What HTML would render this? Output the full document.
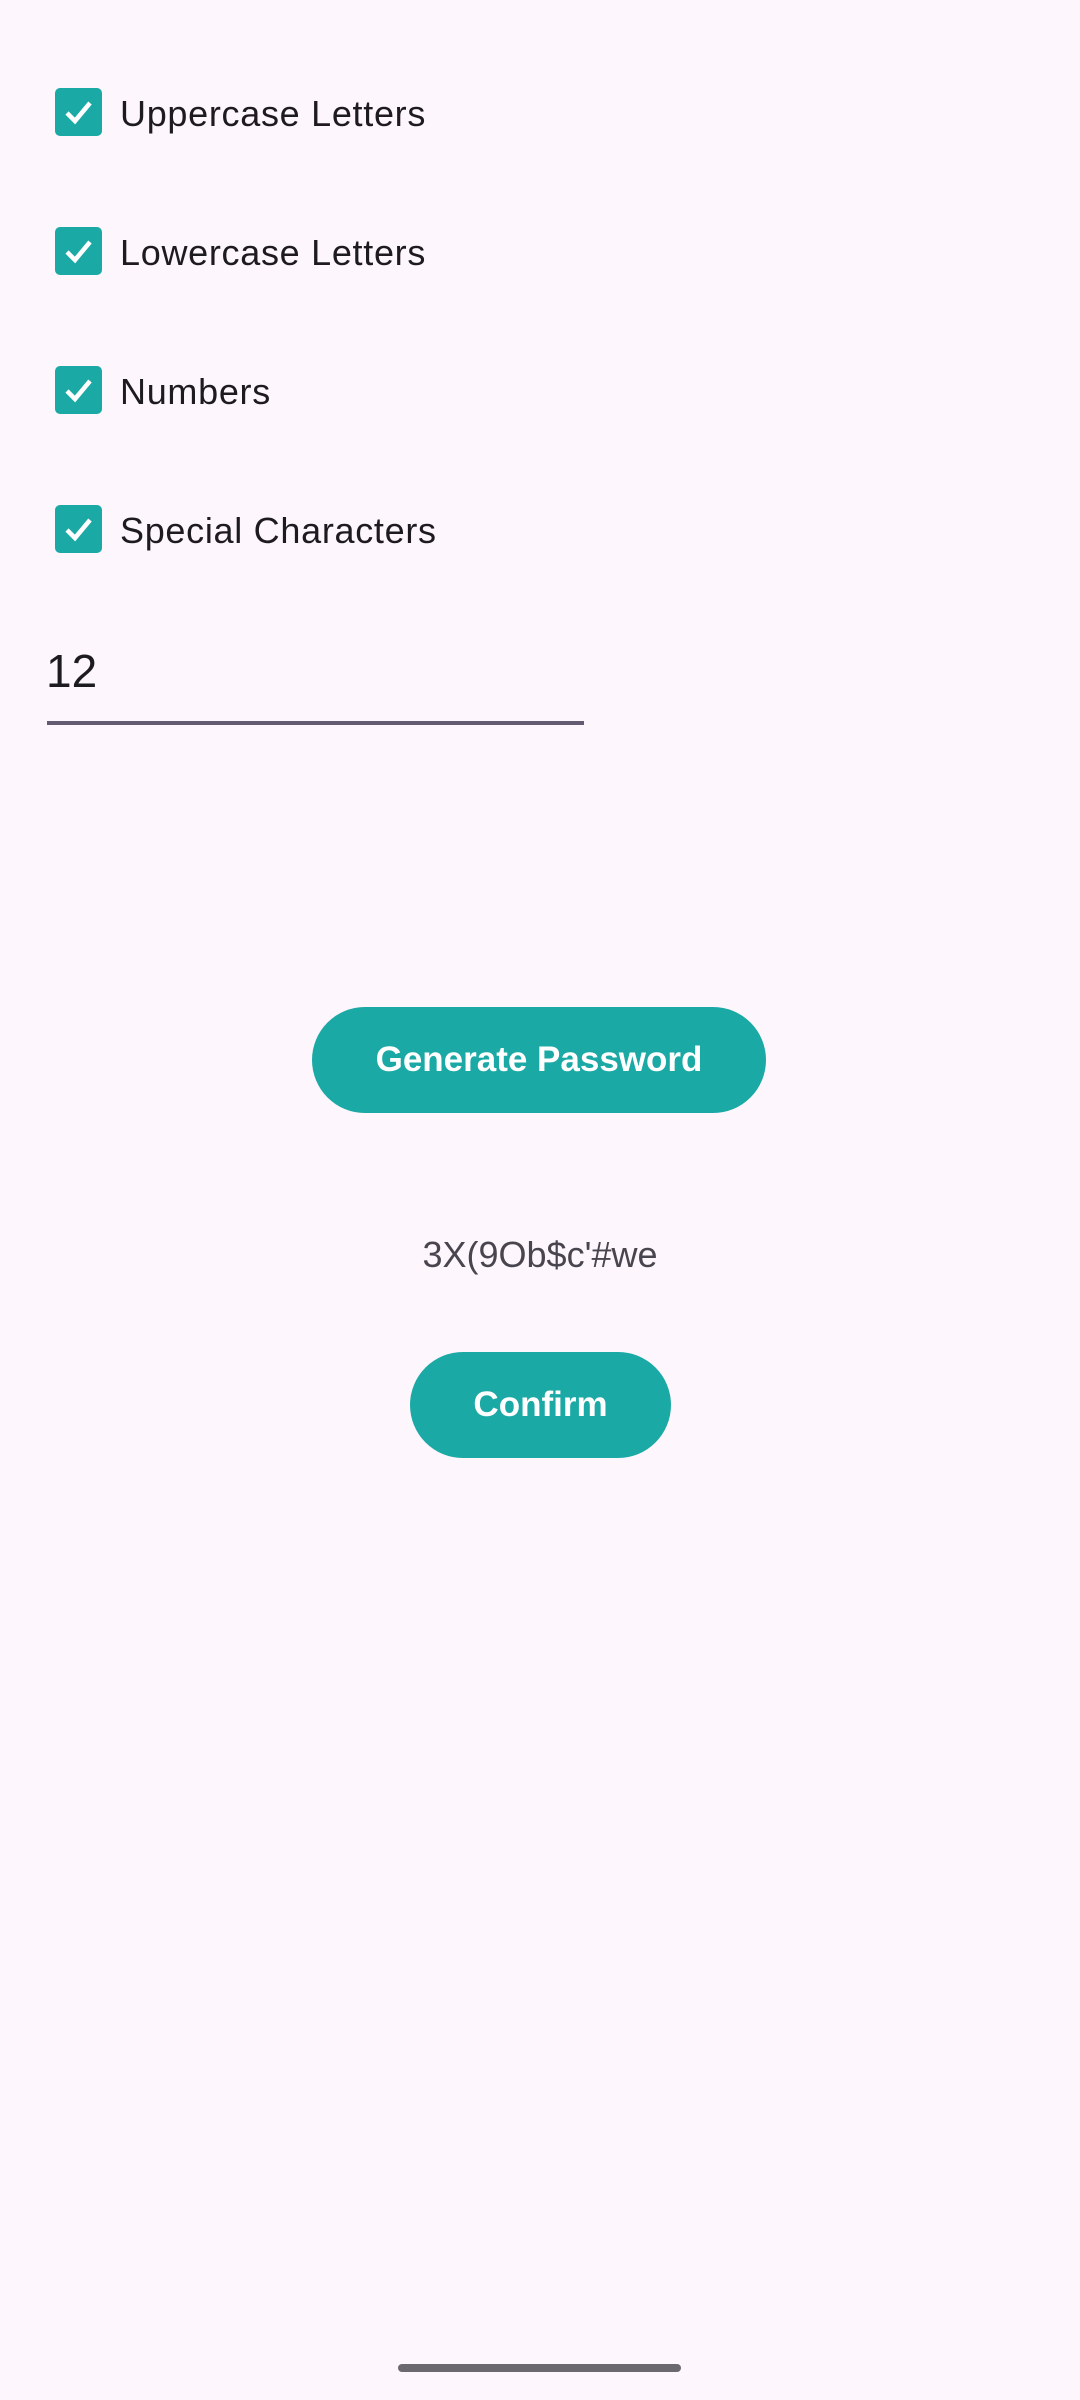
<!DOCTYPE html>
<html><head><meta charset="utf-8"><style>
html,body{margin:0;padding:0}
body{width:1080px;height:2400px;background:#fdf6fd;position:relative;overflow:hidden;font-family:"Liberation Sans",sans-serif}
.cb{position:absolute;left:55px;width:47px;height:48px;background:#1ba9a5;border-radius:5px}
.cb svg{position:absolute;left:0;top:0}
.lbl{position:absolute;left:120px;font-size:36px;letter-spacing:0.7px;color:#1d1b20;line-height:48px}
.btn{position:absolute;background:#1ba9a5;border-radius:60px;color:#fff;font-weight:bold;font-size:35px;text-align:center;line-height:106px;height:106px}
</style></head><body>
<div class="cb" style="top:88px"><svg width="47" height="48"><path d="M12 25 L20 33 L35 15" stroke="#fff" stroke-width="4.5" fill="none"/></svg></div>
<div class="lbl" style="top:90px">Uppercase Letters</div>
<div class="cb" style="top:227px"><svg width="47" height="48"><path d="M12 25 L20 33 L35 15" stroke="#fff" stroke-width="4.5" fill="none"/></svg></div>
<div class="lbl" style="top:229px">Lowercase Letters</div>
<div class="cb" style="top:366px"><svg width="47" height="48"><path d="M12 25 L20 33 L35 15" stroke="#fff" stroke-width="4.5" fill="none"/></svg></div>
<div class="lbl" style="top:368px">Numbers</div>
<div class="cb" style="top:505px"><svg width="47" height="48"><path d="M12 25 L20 33 L35 15" stroke="#fff" stroke-width="4.5" fill="none"/></svg></div>
<div class="lbl" style="top:507px">Special Characters</div>
<div style="position:absolute;left:46px;top:641px;font-size:46px;color:#1d1b20;line-height:60px">12</div>
<div style="position:absolute;left:47px;top:721px;width:537px;height:4px;background:#625b71"></div>
<div class="btn" style="left:312px;top:1007px;width:454px">Generate Password</div>
<div style="position:absolute;left:0;width:1080px;top:1232px;text-align:center;font-size:36px;color:#49454f;line-height:46px">3X(9Ob$c'#we</div>
<div class="btn" style="left:410px;top:1352px;width:261px">Confirm</div>
<div style="position:absolute;left:398px;top:2364px;width:283px;height:8px;border-radius:4px;background:#6b6870"></div>
</body></html>
